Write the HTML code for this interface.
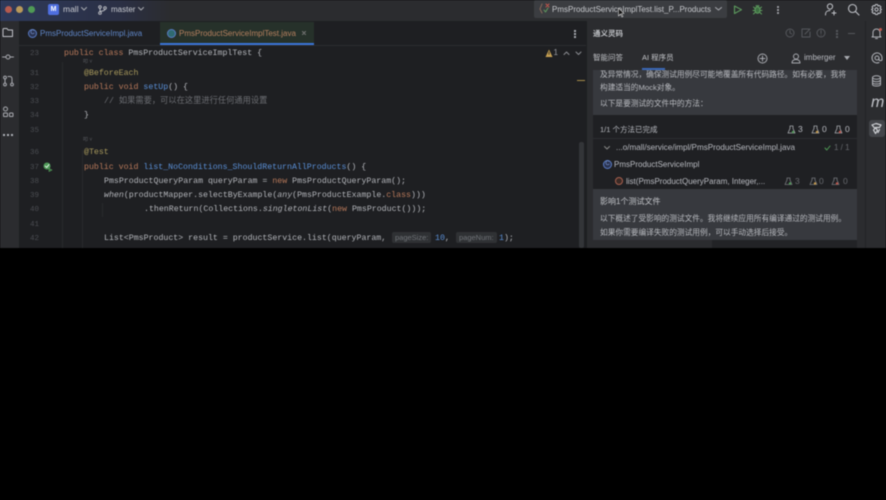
<!DOCTYPE html>
<html><head><meta charset="utf-8"><style>
html,body{margin:0;padding:0;background:#000;width:886px;height:500px;overflow:hidden}
#app{position:absolute;left:0;top:0;width:886px;height:248px;background:#1e1f22;overflow:hidden;font-family:"Liberation Sans","Noto Sans CJK SC",sans-serif;filter:blur(.45px)}
.a{position:absolute;white-space:pre}
.c{position:absolute;white-space:pre;font:8.25px/14px "Liberation Mono","Noto Sans CJK SC",monospace;color:#b4b6bb}
.n{position:absolute;left:20px;width:19px;text-align:right;font:7.5px/14px "Liberation Mono",monospace;color:#4b4d52}
.k{color:#b8795a}.f{color:#5a8fd6}.y{color:#a8995c}.i{font-style:italic}.g{color:#6c6e73}
.u{font-size:7.7px;color:#b9bbc0}
.h{background:#2f3134;color:#707378;font:7.5px/11px "Liberation Sans",sans-serif;padding:0 3px;border-radius:2px;display:inline-block}
.t{font-size:7.5px;color:#c2c4c8}
svg{position:absolute;fill:none;stroke-linecap:round;stroke-linejoin:round}
</style></head><body><div id="app">
<!-- title bar -->
<div class="a" style="left:0;top:0;width:886px;height:21px;background:#2b2c2f"></div>
<div class="a" style="left:0;top:0;width:170px;height:21px;background:linear-gradient(90deg,#2e3a5b,#2b3045 70%,#2b2c2f)"></div>
<div class="a" style="left:4.500px;top:5.500px;width:7.500px;height:7.500px;border-radius:50%;background:#b55a4e"></div>
<div class="a" style="left:15.500px;top:5.500px;width:7.500px;height:7.500px;border-radius:50%;background:#b9995a"></div>
<div class="a" style="left:27.500px;top:5.500px;width:7.500px;height:7.500px;border-radius:50%;background:#4f9a55"></div>
<div class="a" style="left:48px;top:4px;width:11px;height:11px;border-radius:2px;background:#4f6fe0;color:#fff;font:bold 7px/11px 'Liberation Sans';text-align:center">M</div>
<div class="a" style="left:63px;top:4px;font-size:8.500px;line-height:11px;color:#c8cad0">mall</div>
<svg style="left:81px;top:7px" width="6" height="4" stroke="#a8aab0"><path d="M.5.5 3 3 5.500.5"/></svg>
<svg style="left:98px;top:5px" width="9" height="10" stroke="#b8bac0"><circle cx="2" cy="2" r="1.300"/><circle cx="2" cy="8" r="1.300"/><circle cx="7" cy="3" r="1.300"/><path d="M2 3.300V6.700M7 4.300C7 6 4 6 2.500 6.500"/></svg>
<div class="a" style="left:111px;top:4px;font-size:8px;line-height:11px;color:#c8cad0">master</div>
<svg style="left:138px;top:7px" width="6" height="4" stroke="#a8aab0"><path d="M.5.5 3 3 5.500.5"/></svg>
<!-- run config -->
<div class="a" style="left:534px;top:0;width:193px;height:18px;background:#3b3d41;border-radius:2px"></div>
<svg style="left:539px;top:3px" width="12" height="11"><path d="M3 1 1 6 3 10" stroke="#8a6a5a"/><path d="M5 7l1.500 2L9 5" stroke="#5f9a5f"/><path d="M7 1l3 3M10 1 7 4" stroke="#c0564c"/></svg>
<div class="a" style="left:552px;top:4px;font-size:8px;line-height:11px;color:#c6c8cc">PmsProductServiceImplTest.list_P...Products</div>
<svg style="left:715px;top:7px" width="7" height="4" stroke="#a8aab0"><path d="M.5.5 3.500 3 6.500.5"/></svg>
<svg style="left:613px;top:6px" width="12" height="13"><path d="M5.500 2 5.500 10 7.500 8 9 11 10 10.500 8.500 7.500 11 7.500Z" fill="#111" stroke="#ddd" stroke-width=".6"/></svg>
<svg style="left:733px;top:5px" width="10" height="10" stroke="#5d9c5e" stroke-width="1.100"><path d="M1.500 1 8.500 4.700 1.500 8.500Z"/></svg>
<svg style="left:752px;top:4px" width="11" height="11" stroke="#5d9c5e"><ellipse cx="5.500" cy="6" rx="2.500" ry="3.300" fill="#3d6e42"/><path d="M1.500 3 3 4.500M9.500 3 8 4.500M1 6.500H3M10 6.500H8M1.500 10 3 8.500M9.500 10 8 8.500M4 1.700H7"/></svg>
<div class="a" style="left:777px;top:6px;width:2px;height:2px;background:#b0b2b8;box-shadow:0 3px #b0b2b8,0 6px #b0b2b8;border-radius:50%"></div>
<svg style="left:824px;top:3px" width="14" height="13" stroke="#c0c2c8"><circle cx="6" cy="3.500" r="2.600"/><path d="M1.500 12C1.500 8.500 3 7.500 6 7.500M8 10H12M10 8V12"/></svg>
<svg style="left:847px;top:3px" width="13" height="13" stroke="#c0c2c8" stroke-width="1.100"><circle cx="5.500" cy="5.500" r="4"/><path d="M8.500 8.500 12 12"/></svg>
<svg style="left:870px;top:3px" width="13" height="13" stroke="#c0c2c8"><circle cx="6.500" cy="6.500" r="1.600"/><path d="M5.500 1.500H7.500L8 3 9.500 2.500 11 4 10 5.300 11.500 6.500 10 7.700 11 9 9.500 10.500 8 10 7.500 11.500H5.500L5 10 3.500 10.500 2 9 3 7.700 1.500 6.500 3 5.300 2 4 3.500 2.500 5 3Z"/></svg>
<!-- left bar -->
<div class="a" style="left:0;top:21px;width:19px;height:227px;background:#2b2c2f"></div>
<svg style="left:2px;top:27px" width="12" height="11" stroke="#c0c2c8"><path d="M1 2.500C1 1.800 1.500 1.500 2 1.500H5L6 3H10.500V9.500H1Z"/></svg>
<svg style="left:2px;top:53px" width="12" height="8" stroke="#a8aab0"><circle cx="6" cy="4" r="2"/><path d="M.5 4H4M8 4H11.500"/></svg>
<svg style="left:2px;top:75px" width="12" height="12" stroke="#a8aab0"><circle cx="3" cy="2.500" r="1.400"/><circle cx="3" cy="9.500" r="1.400"/><circle cx="10" cy="9.500" r="1.400"/><path d="M3 4V8M6 1.500 8 1.500C9.500 1.500 10 2.500 10 4V8"/></svg>
<svg style="left:2px;top:106px" width="12" height="12" stroke="#a8aab0"><circle cx="3.500" cy="3" r="2"/><rect x="1.500" y="7" width="4" height="3.500" rx=".8"/><rect x="7.500" y="7" width="3.500" height="3.500" rx=".8"/></svg>
<div class="a" style="left:3px;top:134px;width:2px;height:2px;background:#b0b2b8;box-shadow:4px 0 #b0b2b8,8px 0 #b0b2b8"></div>
<!-- tabs -->
<div class="a" style="left:19px;top:21px;width:567px;height:25px;background:#1e1f22"></div>
<div class="a" style="left:19px;top:45px;width:567px;height:1px;background:#2b2d30"></div>
<div class="a" style="left:160px;top:22px;width:154px;height:22px;background:#26312a"></div>
<div class="a" style="left:160px;top:43px;width:154px;height:2px;background:#3a75d8"></div>
<div class="a" style="left:28px;top:29px;width:7px;height:7px;border:1px solid #5a7cc6;border-radius:50%;background:#2a3350;color:#7a9ad8;font:6px/7px 'Liberation Sans';text-align:center">C</div>
<div class="a" style="left:40px;top:28px;font-size:8px;line-height:11px;color:#5f86c8">PmsProductServiceImpl.java</div>
<div class="a" style="left:167px;top:29px;width:7px;height:7px;border:1px solid #5a7cc6;border-radius:50%;background:#2f6a70"></div>
<div class="a" style="left:179px;top:28px;font-size:8px;line-height:11px;color:#b5805f">PmsProductServiceImplTest.java</div>
<svg style="left:302px;top:31px" width="5" height="5" stroke="#777"><path d="M.5.5 3.500 3.500M3.500.5 .5 3.500"/></svg>
<div class="a" style="left:574px;top:30px;width:1.500px;height:1.500px;background:#a8aab0;box-shadow:0 3px #a8aab0,0 6px #a8aab0"></div>
<!-- editor -->
<div class="a" style="left:62px;top:62px;width:1px;height:186px;background:#292a2d"></div>
<div class="a" style="left:82px;top:150px;width:1px;height:98px;background:#28292c"></div>
<div class="a" style="left:102px;top:203px;width:1px;height:14px;background:#292a2d"></div>
<div class="n" style="top:47px">23</div><div class="c" style="left:64px;top:47px"><span class="k">public class</span> PmsProductServiceImplTest {</div>
<div class="a" style="left:83px;top:59px;font-size:5px;line-height:7px;color:#5c5e63">叩 ˅</div>
<div class="n" style="top:67px">31</div><div class="c" style="left:84px;top:67px"><span class="y">@BeforeEach</span></div>
<div class="n" style="top:81px">32</div><div class="c" style="left:84px;top:81px"><span class="k">public void</span> <span class="f">setUp</span>() {</div>
<div class="n" style="top:95px">33</div><div class="c g" style="left:104px;top:95px">// 如果需要，可以在这里进行任何通用设置</div>
<div class="n" style="top:109px">34</div><div class="c" style="left:84px;top:109px">}</div>
<div class="n" style="top:124px">35</div>
<div class="a" style="left:83px;top:137px;font-size:5px;line-height:7px;color:#5c5e63">叩 ˅</div>
<div class="n" style="top:146px">36</div><div class="c" style="left:84px;top:146px"><span class="y">@Test</span></div>
<div class="n" style="top:161px">37</div><div class="c" style="left:84px;top:161px"><span class="k">public void</span> <span class="f">list_NoConditions_ShouldReturnAllProducts</span>() {</div>
<svg style="left:43px;top:162px" width="10" height="10"><circle cx="4" cy="4" r="3.500" fill="#4e9a58"/><path d="M2.200 4 3.700 5.500 6 2.500" stroke="#fff" stroke-width=".8"/><path d="M6 6.500 9 8 6 9.500Z" fill="#2c6a3a" stroke="#5da560" stroke-width=".6"/></svg>
<div class="n" style="top:175px">38</div><div class="c" style="left:104px;top:175px">PmsProductQueryParam queryParam = <span class="k">new</span> PmsProductQueryParam();</div>
<div class="n" style="top:189px">39</div><div class="c" style="left:104px;top:189px"><span class="i">when</span>(productMapper.selectByExample(<span class="i">any</span>(PmsProductExample.<span class="k">class</span>)))</div>
<div class="n" style="top:203px">40</div><div class="c" style="left:144px;top:203px">.thenReturn(Collections.<span class="i">singletonList</span>(<span class="k">new</span> PmsProduct()));</div>
<div class="n" style="top:218px">41</div>
<div class="n" style="top:232px">42</div><div class="c" style="left:104px;top:232px">List&lt;PmsProduct&gt; result = productService.list(queryParam,</div>
<div class="a h" style="left:392px;top:232px">pageSize:</div><div class="c" style="left:435px;top:232px"><span style="color:#5a8fd6">10</span>,</div>
<div class="a h" style="left:456px;top:232px">pageNum:</div><div class="c" style="left:499px;top:232px"><span style="color:#5a8fd6">1</span>);</div>
<svg style="left:545px;top:49px" width="9" height="9"><path d="M4 .5 7.500 8H.5Z" fill="#c7a052"/><path d="M4 3V5.500" stroke="#222" stroke-width=".8"/></svg>
<div class="a" style="left:553.500px;top:48px;font-size:8px;line-height:10px;color:#9a9ca2">1</div>
<svg style="left:563px;top:51px" width="7" height="5" stroke="#8a8c92"><path d="M1 3.500 3.500 1 6 3.500"/></svg>
<svg style="left:575px;top:51px" width="7" height="5" stroke="#8a8c92"><path d="M1 1 3.500 3.500 6 1"/></svg>
<div class="a" style="left:577px;top:79.500px;width:8px;height:1.500px;background:#a88c4a"></div>
<div class="a" style="left:579px;top:142px;width:4.500px;height:106px;background:#333538;border-radius:2px"></div>
<!-- right panel -->
<div class="a" style="left:586px;top:21px;width:280px;height:227px;background:#2b2c2f"></div>
<div class="a" style="left:586px;top:21px;width:1px;height:227px;background:#1e1f22"></div>
<div class="a t" style="left:593px;top:28px;font-weight:bold;line-height:11px">通义灵码</div>
<svg style="left:785px;top:28px" width="10" height="10" stroke="#55575c"><circle cx="5" cy="5" r="4"/><path d="M5 2.500V5L6.800 6"/></svg>
<svg style="left:801px;top:28px" width="10" height="10" stroke="#55575c"><path d="M8 1H1V9H9V4M4 6 9 1"/></svg>
<svg style="left:816px;top:28px" width="10" height="10" stroke="#55575c"><circle cx="5" cy="5" r="4"/><path d="M5 2.500V5.500M5 7.200V7.300"/></svg>
<div class="a" style="left:836px;top:30px;width:1.500px;height:1.500px;background:#55575c;box-shadow:0 3px #55575c,0 6px #55575c"></div>
<div class="a" style="left:848px;top:33px;width:7px;height:1px;background:#55575c"></div>
<div class="a t" style="left:593px;top:52px;line-height:12px">智能问答</div>
<div class="a t" style="left:642px;top:52px;line-height:12px">AI 程序员</div>
<div class="a" style="left:642px;top:68px;width:23px;height:2px;background:#3a68b8"></div>
<svg style="left:757px;top:53px" width="11" height="11" stroke="#a8aab0"><circle cx="5.500" cy="5.500" r="4.500"/><path d="M5.500 3V8M3 5.500H8"/></svg>
<svg style="left:791px;top:53px" width="10" height="11" stroke="#a8aab0"><circle cx="5" cy="3.500" r="2.500"/><path d="M1 10C1 7.500 3 6.500 5 6.500S9 7.500 9 10Z"/></svg>
<div class="a t" style="left:804px;top:52px;font-size:8px;line-height:12px;color:#b8bac0">imberger</div>
<div class="a" style="left:844px;top:56px;width:0;height:0;border:3px solid transparent;border-top:4px solid #a8aab0"></div>
<!-- message cards -->
<div class="a" style="left:593px;top:70px;width:264px;height:45px;background:#37393e"></div>
<div class="a u" style="left:600px;top:69px;line-height:11px">及异常情况，确保测试用例尽可能地覆盖所有代码路径。如有必要，我将</div>
<div class="a u" style="left:600px;top:82px;line-height:11px">构建适当的Mock对象。</div>
<div class="a u" style="left:600px;top:98px;line-height:11px">以下是要测试的文件中的方法：</div>
<div class="a" style="left:593px;top:115px;width:264px;height:74px;background:#1f2023"></div>
<div class="a t" style="left:600px;top:124px;line-height:11px;color:#b8bac0">1/1 个方法已完成</div>
<div class="a" style="left:593px;top:138px;width:264px;height:1px;background:#2b2d30"></div>
<svg style="left:604px;top:146px" width="6" height="4" stroke="#888"><path d="M.5.5 3 3 5.500.5"/></svg>
<div class="a" style="left:616px;top:142px;font-size:8.100px;line-height:11px;color:#b8bac0">...o/mall/service/impl/PmsProductServiceImpl.java</div>
<svg style="left:824px;top:145px" width="7" height="6" stroke="#4f9a55"><path d="M1 3 2.800 5 6 1"/></svg>
<div class="a" style="left:834px;top:142px;font-size:8px;line-height:11px;color:#66686d">1 / 1</div>
<div class="a" style="left:603px;top:160px;width:7px;height:7px;border:1px solid #5a7cc6;border-radius:50%;background:#2a3350;color:#7a9ad8;font:6px/7px 'Liberation Sans';text-align:center">C</div>
<div class="a" style="left:614px;top:159px;font-size:8px;line-height:11px;color:#b8bac0">PmsProductServiceImpl</div>
<div class="a" style="left:615px;top:177px;width:6px;height:6px;border:1px solid #a8604e;border-radius:50%;background:#3a2a26"></div>
<div class="a" style="left:626px;top:176px;font-size:8px;line-height:11px;color:#b8bac0">list(PmsProductQueryParam, Integer,...</div>
<!-- flask icons -->
<svg style="left:0;top:0;overflow:visible" width="886" height="248">
<g stroke="#a8aab0" stroke-width=".8"><path d="M790 126V128.500L788 133H795L793 128.500V126Z"/><path d="M814 126V128.500L812 133H819L817 128.500V126Z"/><path d="M837 126V128.500L835 133H842L840 128.500V126Z"/></g>
<g stroke="#77797e" stroke-width=".8"><path d="M787 178V180L785 184.500H792L790 180V178Z"/><path d="M812 178V180L810 184.500H817L815 180V178Z"/><path d="M834 178V180L832 184.500H839L837 180V178Z"/></g>
<circle cx="793" cy="132" r="1.200" fill="#4f9a55"/><circle cx="817" cy="132" r="1.200" fill="#c79a4a"/><circle cx="840" cy="132" r="1.200" fill="#c0564c"/>
<circle cx="790" cy="183.500" r="1.200" fill="#4f9a55"/><circle cx="815" cy="183.500" r="1.200" fill="#c79a4a"/><circle cx="837" cy="183.500" r="1.200" fill="#c0564c"/>
</svg>
<div class="a" style="left:798px;top:124px;font-size:8.500px;line-height:11px;color:#b8bac0">3</div>
<div class="a" style="left:822px;top:124px;font-size:8.500px;line-height:11px;color:#b8bac0">0</div>
<div class="a" style="left:845px;top:124px;font-size:8.500px;line-height:11px;color:#b8bac0">0</div>
<div class="a" style="left:795px;top:176px;font-size:8.500px;line-height:11px;color:#66686d">3</div>
<div class="a" style="left:819px;top:176px;font-size:8.500px;line-height:11px;color:#66686d">0</div>
<div class="a" style="left:843px;top:176px;font-size:8.500px;line-height:11px;color:#66686d">0</div>
<div class="a" style="left:593px;top:189px;width:264px;height:51px;background:#37393e"></div>
<div class="a" style="left:600px;top:196px;font-size:8px;line-height:11px;color:#c2c4c8">影响1个测试文件</div>
<div class="a u" style="left:600px;top:213px;line-height:11px">以下概述了受影响的测试文件。我将继续应用所有编译通过的测试用例。</div>
<div class="a u" style="left:600px;top:227px;line-height:11px">如果你需要编译失败的测试用例，可以手动选择后接受。</div>
<div class="a" style="left:712px;top:240px;width:145px;height:8px;background:#222326"></div>
<!-- right rail -->
<div class="a" style="left:866px;top:21px;width:20px;height:227px;background:#2b2c2f"></div>
<div class="a" style="left:865px;top:21px;width:1px;height:227px;background:#222326"></div>
<svg style="left:871px;top:27px" width="12" height="12" stroke="#b0b2b8"><path d="M2 9V5.500C2 3.500 3.500 2 5.500 2S9 3.500 9 5.500V9L10 10H1ZM4.500 11.500H6.500"/><circle cx="9.500" cy="2.500" r="1.500" fill="#c0564c" stroke="none"/></svg>
<svg style="left:871px;top:52px" width="12" height="12" stroke="#b0b2b8"><circle cx="6" cy="6" r="2"/><path d="M11 8V6A5 5 0 1 0 8 10.500M8 6V7.500C8 9 11 9 11 7.500"/></svg>
<svg style="left:871px;top:75px" width="11" height="12" stroke="#b0b2b8"><ellipse cx="5.500" cy="2.500" rx="4" ry="1.700"/><path d="M1.500 2.500V9.500C1.500 10.500 3.500 11 5.500 11S9.500 10.500 9.500 9.500V2.500M1.500 5C1.500 6 3.500 6.700 5.500 6.700S9.500 6 9.500 5M1.500 7.500C1.500 8.500 3.500 9 5.500 9S9.500 8.500 9.500 7.500"/></svg>
<div class="a" style="left:871px;top:95px;font:italic 16px/16px 'Liberation Sans',sans-serif;color:#c0c2c8">m</div>
<div class="a" style="left:869px;top:120px;width:16px;height:17px;background:#43454a;border-radius:3px"></div>
<svg style="left:870px;top:122px" width="13" height="13" stroke="#d0d2d6" stroke-width="1.200"><path d="M2 3 6 1.500 11 3 9.500 5.500H5.500L7.500 8.500 5.500 11.500 3.500 8 5 6.500ZM9.500 7.500 8 10.500"/></svg>
</div></body></html>
